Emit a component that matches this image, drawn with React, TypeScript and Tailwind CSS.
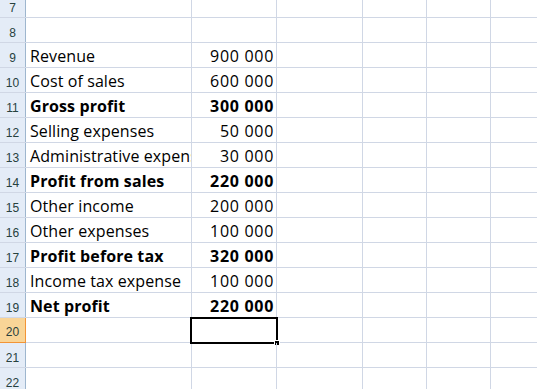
const rows: { n: number; label?: string; value?: string; bold?: boolean }[] = [
  { n: 7 },
  { n: 8 },
  { n: 9, label: "Revenue", value: "900 000" },
  { n: 10, label: "Cost of sales", value: "600 000" },
  { n: 11, label: "Gross profit", value: "300 000", bold: true },
  { n: 12, label: "Selling expenses", value: "50 000" },
  { n: 13, label: "Administrative expenses", value: "30 000" },
  { n: 14, label: "Profit from sales", value: "220 000", bold: true },
  { n: 15, label: "Other income", value: "200 000" },
  { n: 16, label: "Other expenses", value: "100 000" },
  { n: 17, label: "Profit before tax", value: "320 000", bold: true },
  { n: 18, label: "Income tax expense", value: "100 000" },
  { n: 19, label: "Net profit", value: "220 000", bold: true },
  { n: 20 },
  { n: 21 },
  { n: 22 },
];

const cell = "h-full border-r border-[#d0d7e5] shrink-0";

export default function App() {
  return (
    <div className="w-[537px] h-[389px] overflow-hidden bg-white font-['Open_Sans','Liberation_Sans',sans-serif] text-[16px] leading-[21px] text-black">
      <div className="-mt-[7px] flex flex-col">
        {rows.map((r) => {
          const selected = r.n === 20;
          return (
            <div key={r.n} className="flex h-[25px] border-b border-[#d0d7e5]">
              <div
                className={
                  selected
                    ? "w-[26px] shrink-0 h-[calc(100%+1px)] -mb-px flex items-end justify-center pb-[4px] bg-[#f9d597] border-r border-b border-[#f29436] text-[12px] leading-none text-[#27413e] font-['Liberation_Sans',sans-serif]"
                    : "w-[26px] shrink-0 h-full flex items-end justify-center pb-[3px] bg-[#e4ecf7] border-r border-[#9eb6ce] text-[12px] leading-none text-[#27413e] font-['Liberation_Sans',sans-serif]"
                }
              >
                {r.n}
              </div>
              <div className={`${cell} w-[166px] flex items-end pl-[4px] overflow-hidden whitespace-nowrap tracking-[0.1px] ${r.bold ? "font-bold" : ""}`}>
                {r.label}
              </div>
              <div className={`${cell} w-[85px] relative flex items-end justify-end pr-[2px] tracking-[0.7px] ${r.bold ? "font-bold" : ""}`}>
                {r.value}
                {selected && (
                  <>
                    <span className="absolute -left-[2px] -top-[1px] w-[88px] h-[27px] border-[2px] border-black" />
                    <span className="absolute -right-[4px] -bottom-[4px] w-[6px] h-[6px] bg-black border border-white" />
                  </>
                )}
              </div>
              <div className={`${cell} w-[86px]`} />
              <div className={`${cell} w-[64px]`} />
              <div className={`${cell} w-[64px]`} />
              <div className="h-full flex-1" />
            </div>
          );
        })}
      </div>
    </div>
  );
}
